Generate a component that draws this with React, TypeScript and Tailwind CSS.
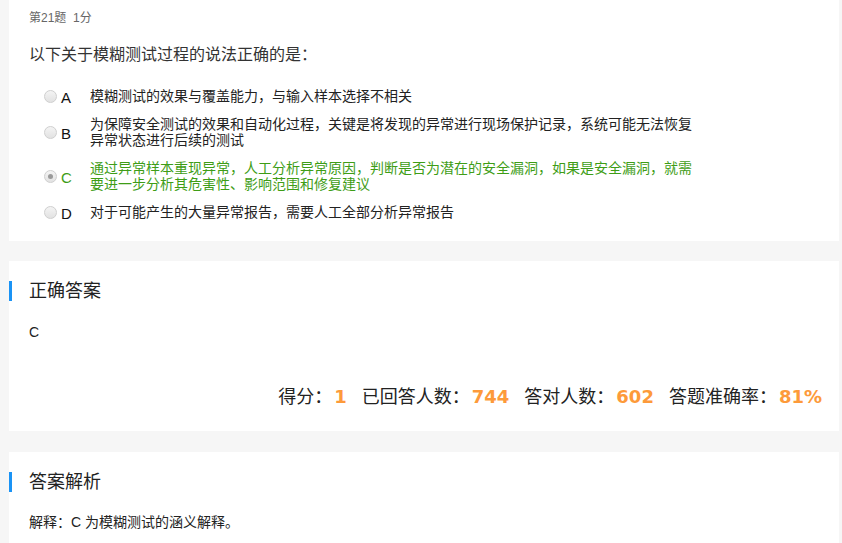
import React from "react";

const FONT = '"Liberation Sans", Arial, "Noto Sans CJK SC", sans-serif';

function Radio({ checked }: { checked?: boolean }) {
  return (
    <div className="w-[13px] h-[13px] rounded-full border border-[#cfcfcf] bg-gradient-to-b from-[#f4f4f4] to-[#e2e2e2] flex items-center justify-center shrink-0">
      {checked ? <div className="w-[5px] h-[5px] rounded-full bg-[#9a9a9a]" /> : null}
    </div>
  );
}

const options = [
  { k: "A", lines: ["模糊测试的效果与覆盖能力，与输入样本选择不相关"] },
  {
    k: "B",
    lines: [
      "为保障安全测试的效果和自动化过程，关键是将发现的异常进行现场保护记录，系统可能无法恢复",
      "异常状态进行后续的测试",
    ],
  },
  {
    k: "C",
    green: true,
    checked: true,
    lines: [
      "通过异常样本重现异常，人工分析异常原因，判断是否为潜在的安全漏洞，如果是安全漏洞，就需",
      "要进一步分析其危害性、影响范围和修复建议",
    ],
  },
  { k: "D", lines: ["对于可能产生的大量异常报告，需要人工全部分析异常报告"] },
];

function SectionTitle({ text }: { text: string }) {
  return (
    <div className="flex items-center h-[20px]">
      <div className="w-[3px] h-[20px] bg-[#1a93f5]" />
      <div className="ml-[17px] text-[18px] leading-[20px] text-[#222]">{text}</div>
    </div>
  );
}

export default function App() {
  return (
    <div className="min-h-screen bg-[#f6f6f6] pl-[9px] pr-[3px]" style={{ fontFamily: FONT }}>
      <div className="bg-white pt-[10px] pb-[21px] px-5">
        <div className="text-[12px] leading-[16px] text-[#666]">第21题&nbsp;&nbsp;1分</div>
        <div className="mt-[17px] text-[16px] leading-[24px] text-[#333]">以下关于模糊测试过程的说法正确的是：</div>
        <div className="mt-[21px] pl-[15px] flex flex-col gap-[12px]">
          {options.map((o) => (
            <div key={o.k} className="flex items-center">
              <Radio checked={o.checked} />
              <div className={`ml-[4px] w-[29px] h-[16px] text-[15px] leading-[16px] translate-y-[2px] ${o.green ? "text-[#3e9d16]" : "text-[#111]"}`}>{o.k}</div>
              <div className={`w-[610px] text-[14px] leading-[16px] ${o.green ? "text-[#3e9d16]" : "text-[#222]"}`}>
                {o.lines.map((l, i) => (
                  <div key={i}>{l}</div>
                ))}
              </div>
            </div>
          ))}
        </div>
      </div>

      <div className="mt-[20px] bg-white pt-[20px] pb-[22px]">
        <SectionTitle text="正确答案" />
        <div className="mt-[21px] pl-5 text-[14px] leading-[20px] text-[#222]">C</div>
        <div className="mt-[43px] pr-[17px] flex justify-end items-center text-[18px] leading-[24px] text-[#222]">
          <span>得分：</span>
          <span className="ml-[2px] font-bold text-[#fd9a3a]" style={{ fontFamily: '"DejaVu Sans", Verdana, sans-serif' }}>1</span>
          <span className="ml-[15px]">已回答人数：</span>
          <span className="ml-[2px] font-bold text-[#fd9a3a]" style={{ fontFamily: '"DejaVu Sans", Verdana, sans-serif' }}>744</span>
          <span className="ml-[15px]">答对人数：</span>
          <span className="ml-[2px] font-bold text-[#fd9a3a]" style={{ fontFamily: '"DejaVu Sans", Verdana, sans-serif' }}>602</span>
          <span className="ml-[15px]">答题准确率：</span>
          <span className="ml-[2px] font-bold text-[#fd9a3a]" style={{ fontFamily: '"DejaVu Sans", Verdana, sans-serif' }}>81%</span>
        </div>
      </div>

      <div className="mt-[21px] bg-white pt-[20px] pb-[30px]">
        <SectionTitle text="答案解析" />
        <div className="mt-[20px] pl-5 text-[14px] leading-[20px] text-[#222]">解释：C 为模糊测试的涵义解释。</div>
      </div>
    </div>
  );
}
